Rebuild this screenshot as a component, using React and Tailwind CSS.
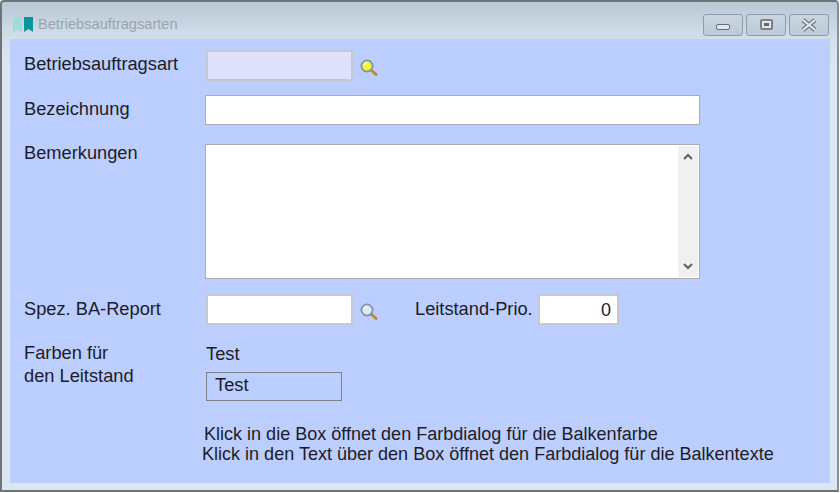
import React from "react";

function Magnifier({ lens }) {
  return (
    <svg width="20" height="20" viewBox="0 0 20 20" className="shrink-0">
      <path d="M11.5 11.5L17 16.5" stroke="#b98a3c" strokeWidth="3" strokeLinecap="round" />
      <circle cx="8" cy="8" r="5.6" fill={lens} stroke="#7d93a8" strokeWidth="1.8" />
      <path d="M5 7.5a3.4 3.4 0 0 1 3-3" stroke="#ffffff" strokeOpacity="0.7" strokeWidth="1.2" fill="none" />
    </svg>
  );
}

function WinButton({ children }) {
  return (
    <div className="w-[40px] h-[22px] flex items-center justify-center rounded-[3px] border border-[#8d9cab] bg-gradient-to-b from-[#c9d6e2] to-[#bccad7]">
      {children}
    </div>
  );
}

export default function App() {
  return (
    <div className="w-[840px] h-[493px] bg-white font-['Liberation_Sans',Arial,sans-serif] text-[18.25px] text-[#1c1c28] overflow-hidden">
      <div className="w-[839px] h-[492px] flex flex-col border-2 border-[#6f7478] border-r-[#8a8f93] rounded-t-[4px] bg-[linear-gradient(to_bottom,#b9c8d5_0px,#d3e0ec_38px,#dae6f2_60px,#dae6f2_100%)] pl-[8px] pr-[7px] pb-[7px]">
        {/* title bar */}
        <div className="h-[37px] shrink-0 flex items-center pt-[8px]">
          <svg width="22" height="17" viewBox="0 0 22 17" className="ml-[2px] shrink-0">
            <path d="M1 1h9v15l-4.5-3L1 16z" fill="#9fdcd3" />
            <path d="M12 1h9v15l-4.500-3L12 16z" fill="#08979c" />
          </svg>
          <span className="ml-[4px] text-[14.6px] text-[#9aa3ab]">Betriebsauftragsarten</span>
          <div className="ml-auto flex gap-[3px] pr-[1px]">
            <WinButton>
              <div className="w-[14px] h-[6px] mt-[5px] rounded-[2px] bg-[#e4e7ea] border border-[#646b72]" />
            </WinButton>
            <WinButton>
              <div className="w-[13px] h-[11px] rounded-[2px] border-2 border-[#7a8189] bg-[#e4e7ea] flex items-center justify-center">
                <div className="w-[5px] h-[3px] bg-[#5e656c]" />
              </div>
            </WinButton>
            <WinButton>
              <svg width="18" height="14" viewBox="0 0 18 14">
                <path d="M3 2L15 12M15 2L3 12" stroke="#6d747b" strokeWidth="4.400" />
                <path d="M3 2L15 12M15 2L3 12" stroke="#e6e9ec" strokeWidth="2.200" />
              </svg>
            </WinButton>
          </div>
        </div>

        {/* form */}
        <div className="flex-1 bg-[#bccefe] pt-[11px] pl-[14px]">
          <div className="flex items-start h-[45px]">
            <div className="w-[182px] leading-[28px]">Betriebsauftragsart</div>
            <div className="w-[147px] h-[31px] border-2 border-[#c4c8d6] bg-[#e0e2fd]" />
            <div className="ml-[6px] mt-[8px]"><Magnifier lens="#f4f436" /></div>
          </div>
          <div className="flex items-start h-[49px]">
            <div className="w-[181px] leading-[28px]">Bezeichnung</div>
            <div className="w-[495px] h-[30px] border border-[#a9acb4] bg-white" />
          </div>
          <div className="flex items-start h-[150px]">
            <div className="w-[181px] leading-[18px]">Bemerkungen</div>
            <div className="w-[495px] h-[135px] border border-[#a9acb4] bg-white flex justify-end pr-[1px] py-[1px]">
              <div className="w-[20px] h-full bg-[#f0f0f0] flex flex-col items-center justify-between py-[7px] text-[#606060]">
                <svg width="10" height="7" viewBox="0 0 10 7"><path d="M1 6l4-4 4 4" fill="none" stroke="currentColor" strokeWidth="2" /></svg>
                <svg width="10" height="7" viewBox="0 0 10 7"><path d="M1 1l4 4 4-4" fill="none" stroke="currentColor" strokeWidth="2" /></svg>
              </div>
            </div>
          </div>
          <div className="flex items-start h-[49px]">
            <div className="w-[182px] leading-[30px]">Spez. BA-Report</div>
            <div className="w-[147px] h-[31px] border-2 border-[#c4c8d6] bg-white" />
            <div className="ml-[6px] mt-[8px]"><Magnifier lens="#dce8f4" /></div>
            <div className="ml-[36px] leading-[30px] w-[123px]">Leitstand-Prio.</div>
            <div className="w-[81px] h-[31px] border-2 border-[#c4c8d6] bg-white text-right pr-[6px] pt-[3px] text-[18px] leading-[22px]">0</div>
          </div>
          <div className="flex items-start">
            <div className="w-[182px] leading-[23px] -mt-[2px]">
              Farben für
              <br />
              den Leitstand
            </div>
            <div className="flex flex-col">
              <div className="leading-[22px]">Test</div>
              <div className="w-[136px] h-[29px] mt-[7px] border-[1.5px] border-[#7f8288] pl-[8px] leading-[24px]">Test</div>
            </div>
          </div>
          <div className="ml-[178px] mt-[23px] leading-[20px] text-[18.05px]">
            <div className="pl-[2px]">Klick in die Box öffnet den Farbdialog für die Balkenfarbe</div>
            <div>Klick in den Text über den Box öffnet den Farbdialog für die Balkentexte</div>
          </div>
        </div>
      </div>
    </div>
  );
}
